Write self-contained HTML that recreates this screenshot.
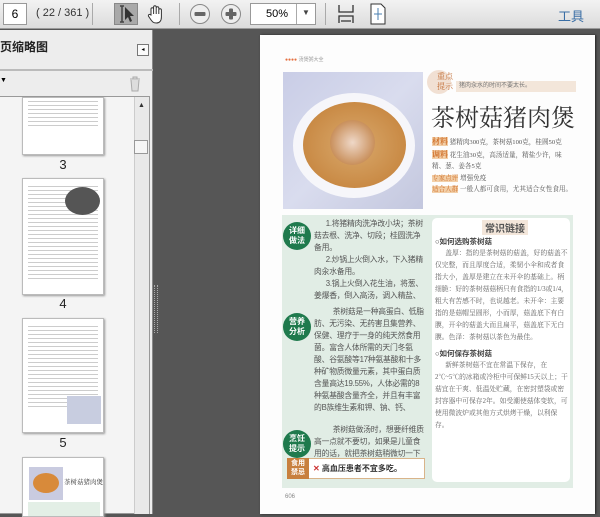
<!DOCTYPE html>
<html><head><meta charset="utf-8"><style>
*{margin:0;padding:0;box-sizing:border-box}
body{width:600px;height:514px;overflow:hidden;background:#565656;font-family:"Liberation Sans","Noto Sans CJK SC",sans-serif;position:relative}
.a{position:absolute}
.tb{left:0;top:0;width:600px;height:29px;background:linear-gradient(#f2f2f2,#dcdcdc);border-bottom:1px solid #9a9a9a}
.sep{width:1px;height:22px;top:3px;background:#aaa}
.t{font-size:7.8px;line-height:12px;color:#555;overflow:hidden;letter-spacing:-0.2px}
.circ{width:28px;height:28px;border-radius:50%;background:#1f7a4d;color:#fff;font-size:8px;line-height:10px;text-align:center;padding-top:4px;font-weight:bold}
.thumb{background:#fff;border:1px solid #bbb;box-shadow:1px 1px 2px #999;left:22px;width:82px;overflow:hidden}
.ln{height:1px;background:#ccc;margin:3px 5px}
.lbl{font-size:13px;color:#222;width:82px;left:22px;text-align:center}
.rt{font-size:6.8px;line-height:12px;color:#666;font-family:"Liberation Serif","Noto Serif CJK SC",serif;overflow:hidden}
</style></head><body>
<div class="a tb">
 <div class="a" style="left:3px;top:3px;width:24px;height:22px;background:#fff;border:1px solid #999;font-size:12px;text-align:center;line-height:20px">6</div>
 <div class="a" style="left:36px;top:7px;font-size:11px;color:#333">( 22 / 361 )</div>
 <div class="a sep" style="left:92px"></div>
 <div class="a" style="left:114px;top:3px;width:24px;height:22px;background:#a9a9a9;border:1px solid #888"></div>
 <svg class="a" style="left:114px;top:3px" width="24" height="22"><path d="M6 3h4M8 3v16M6 19h4" stroke="#444" stroke-width="1.5" fill="none"/><path d="M11 4l9 9h-4l2 5-2 1-2-5-3 3z" fill="#333"/></svg>
 <svg class="a" style="left:145px;top:3px" width="22" height="22"><path d="M6 12V6a1.3 1.3 0 0 1 2.6 0v5V4a1.3 1.3 0 0 1 2.6 0v7V5a1.3 1.3 0 0 1 2.6 0v6V7a1.3 1.3 0 0 1 2.6 0v7c0 4-2 6-5 6s-4-1-6-4l-2-3a1.2 1.2 0 0 1 2-1.2z" fill="#fff" stroke="#333" stroke-width="1"/></svg>
 <div class="a sep" style="left:179px"></div>
 <svg class="a" style="left:189px;top:3px" width="22" height="22"><circle cx="11" cy="11" r="9.5" fill="#eee" stroke="#888"/><rect x="5.5" y="9" width="11" height="4" rx="1" fill="#666"/></svg>
 <svg class="a" style="left:220px;top:3px" width="22" height="22"><circle cx="11" cy="11" r="9.5" fill="#eee" stroke="#888"/><rect x="5.5" y="9" width="11" height="4" rx="1" fill="#666"/><rect x="9" y="5.5" width="4" height="11" rx="1" fill="#666"/></svg>
 <div class="a" style="left:250px;top:3px;width:66px;height:22px;background:#fff;border:1px solid #999"><span class="a" style="left:15px;top:4px;font-size:11px">50%</span><div class="a" style="left:45px;top:0;width:1px;height:20px;background:#aaa"></div><span class="a" style="left:51px;top:4px;font-size:8px;color:#444">▼</span></div>
 <div class="a sep" style="left:325px"></div>
 <svg class="a" style="left:337px;top:3px" width="18" height="22"><path d="M2 2v7h14V2M2 20v-7h14v7M4 18h10" stroke="#333" stroke-width="1.3" fill="none"/></svg>
 <svg class="a" style="left:369px;top:3px" width="18" height="22"><path d="M2 1h10l4 4v16H2z" fill="#fff" stroke="#333"/><path d="M9 5v12M5 11h8" stroke="#4a7fb0"/></svg>
 <div class="a" style="left:558px;top:6px;font-size:13px;color:#3a6ea5">工具</div>
</div>
<div class="a" style="left:0;top:30px;width:153px;height:484px;background:#ededed;border-right:1px solid #888"></div>
<div class="a" style="left:0;top:38px;font-size:12px;font-weight:bold;color:#222">页缩略图</div>
<div class="a" style="left:137px;top:44px;width:12px;height:12px;border:1px solid #777;background:#fafafa;font-size:6px;text-align:center;line-height:10px">◂</div>
<div class="a" style="left:0;top:69px;width:153px;height:2px;background:#bbb"></div>
<div class="a" style="left:0;top:77px;font-size:7px">▼</div>
<svg class="a" style="left:128px;top:76px" width="14" height="16"><path d="M2 3h10M5 3V1h4v2M3 4l1 11h6l1-11" stroke="#aaa" fill="#ddd"/></svg>
<div class="a" style="left:0;top:96px;width:150px;height:418px;border:1px solid #999;border-left:none;background:#f4f4f4"></div>
<div class="a" style="left:134px;top:97px;width:15px;height:417px;background:#e9e9e9;border-left:1px solid #ccc"></div>
<div class="a" style="left:138px;top:102px;font-size:7px;color:#333">▲</div>
<div class="a" style="left:134px;top:140px;width:14px;height:14px;background:#f6f6f6;border:1px solid #999"></div>
<div class="a thumb" style="top:97px;height:58px"><div class="ln"></div><div class="ln"></div><div class="ln"></div><div class="ln"></div><div class="ln"></div><div class="ln"></div><div class="ln"></div></div>
<div class="a lbl" style="top:157px">3</div>
<div class="a thumb" style="top:178px;height:117px;padding-top:4px"><div class="ln"></div><div class="ln"></div><div class="ln"></div><div class="ln"></div><div class="ln"></div><div class="ln"></div><div class="ln"></div><div class="ln"></div><div class="ln"></div><div class="ln"></div><div class="ln"></div><div class="ln"></div><div class="ln"></div><div class="ln"></div><div class="ln"></div><div class="ln"></div><div class="ln"></div><div class="ln"></div><div class="ln"></div><div class="ln"></div><div class="ln"></div><div class="ln"></div><div class="ln"></div><div class="ln"></div><div class="a" style="left:42px;top:8px;width:35px;height:28px;border-radius:50%;background:#555"></div></div>
<div class="a lbl" style="top:296px">4</div>
<div class="a thumb" style="top:318px;height:115px;padding-top:4px"><div class="ln"></div><div class="ln"></div><div class="ln"></div><div class="ln"></div><div class="ln"></div><div class="ln"></div><div class="ln"></div><div class="ln"></div><div class="ln"></div><div class="ln"></div><div class="ln"></div><div class="ln"></div><div class="ln"></div><div class="ln"></div><div class="ln"></div><div class="ln"></div><div class="ln"></div><div class="ln"></div><div class="ln"></div><div class="ln"></div><div class="ln"></div><div class="a" style="left:44px;top:77px;width:34px;height:28px;background:#c8cde0"></div></div>
<div class="a lbl" style="top:435px">5</div>
<div class="a thumb" style="top:457px;height:60px"><div class="a" style="left:6px;top:9px;width:34px;height:33px;background:#c9cbe0"><div style="margin:6px 4px;height:20px;border-radius:50%;background:#d88a3a"></div></div><div class="a" style="left:41px;top:19px;font-size:6.5px;color:#333;white-space:nowrap;font-family:'Noto Serif CJK SC',serif">茶树菇猪肉煲</div><div class="a" style="left:5px;top:44px;width:72px;height:16px;background:#e3efe6"></div></div>
<div class="a" style="left:154px;top:285px;width:4px;height:48px;border-left:1px dotted #aaa;border-right:1px dotted #aaa"></div>
<!-- page -->
<div class="a" style="left:260px;top:35px;width:335px;height:479px;background:#fdfdfd;box-shadow:1px 0 2px #222"></div>
<div class="a" style="left:285px;top:56px;font-size:5px;color:#e57040">●●●● <span style="color:#999">汤煲粥大全</span></div>
<div class="a" style="left:283px;top:72px;width:140px;height:137px;background:linear-gradient(135deg,#c9cde6,#d9dcee 50%,#c3c7de)"></div>
<div class="a" style="left:293px;top:93px;width:122px;height:105px;border-radius:50%;background:#f6f6fa"></div>
<div class="a" style="left:303px;top:102px;width:103px;height:86px;border-radius:50%;background:radial-gradient(#d9a96c,#c98a45 70%,#e1b37a)"></div>
<div class="a" style="left:330px;top:120px;width:45px;height:45px;border-radius:50%;background:radial-gradient(#efd8c8,#c9905c 70%,transparent 72%)"></div>
<div class="a" style="left:427px;top:70px;width:24px;height:24px;border-radius:50%;background:#f1e0d3"></div>
<div class="a" style="left:437px;top:72px;font-size:8px;line-height:10px;color:#c06a30;font-family:'Noto Serif CJK SC',serif">重点<br>提示</div>
<div class="a" style="left:456px;top:81px;width:120px;height:11px;background:#f3e6da;font-size:6px;color:#777;padding-left:3px;line-height:11px;white-space:nowrap;overflow:hidden">猪肉汆水的时间不要太长。</div>
<div class="a" style="left:431px;top:98px;font-size:24px;color:#333;font-family:'Noto Serif CJK SC',serif;white-space:nowrap">茶树菇猪肉煲</div>
<div class="a rt" style="left:432px;top:136px;width:142px;height:70px;line-height:11.5px;font-size:6.6px;color:#555"><span style="background:#f2cfa8;color:#d0702a;font-weight:bold;font-size:8px">材料</span> 猪精肉300克，茶树菇100克，桂圆50克<br><span style="background:#f2cfa8;color:#d0702a;font-weight:bold;font-size:8px">调料</span> 花生油30克，高汤适量，精盐少许，味精、葱、姜各5克<br><span style="background:#f2cfa8;color:#d0702a">专家点评</span> 增强免疫<br><span style="background:#f2cfa8;color:#d0702a">适合人群</span> 一般人都可食用，尤其适合女性食用。</div>
<div class="a" style="left:282px;top:215px;width:291px;height:273px;background:#e1ede5"></div>
<div class="a circ" style="left:283px;top:222px">详细<br>做法</div>
<div class="a circ" style="left:283px;top:313px">营养<br>分析</div>
<div class="a circ" style="left:283px;top:430px">烹饪<br>提示</div>
<div class="a t" style="left:314px;top:218px;width:111px;height:84px"><p style="text-indent:1.5em">1.将猪精肉洗净改小块；茶树菇去根、洗净、切段；桂圆洗净备用。</p><p style="text-indent:1.5em">2.炒锅上火倒入水，下入猪精肉汆水备用。</p><p style="text-indent:1.5em">3.锅上火倒入花生油，将葱、姜爆香，倒入高汤，调入精盐、味精，加入猪精肉、茶树菇、桂圆煲至成熟即可。</p></div>
<div class="a t" style="left:314px;top:306px;width:111px;height:108px;text-indent:2.4em">茶树菇是一种高蛋白、低脂肪、无污染、无药害且集营养、保健、理疗于一身的纯天然食用菌。富含人体所需的天门冬氨酸、谷氨酸等17种氨基酸和十多种矿物质微量元素，其中蛋白质含量高达19.55%，人体必需的8种氨基酸含量齐全，并且有丰富的B族维生素和钾、钠、钙、镁、铁、锌等矿质元素。</div>
<div class="a t" style="left:314px;top:424px;width:111px;height:36px;text-indent:2.4em">茶树菇做汤时，想要纤维质高一点就不要切，如果是儿童食用的话，就把茶树菇稍微切一下即可。</div>
<div class="a" style="left:287px;top:458px;width:138px;height:21px;background:#fff;border:1px solid #d9b48a"></div>
<div class="a" style="left:287px;top:458px;width:22px;height:21px;background:#c8803e;color:#fff;font-size:7px;line-height:9px;text-align:center;padding-top:1px;font-weight:bold">食用<br>禁忌</div>
<div class="a" style="left:313px;top:463px;font-size:8px;color:#333;font-weight:bold;white-space:nowrap"><span style="color:#c33">✕</span> 高血压患者不宜多吃。</div>
<div class="a" style="left:432px;top:218px;width:138px;height:264px;background:#fff;border-radius:5px"></div>
<div class="a" style="left:482px;top:220px;font-size:10px;color:#555;font-weight:bold;background:#f3e6da;padding:0 3px">常识链接</div>
<div class="a" style="left:435px;top:236px;font-size:7.5px;font-weight:bold;color:#444">○如何选购茶树菇</div>
<div class="a rt" style="left:435px;top:248px;width:133px;height:96px;text-indent:1.5em">盖厚：指的是茶树菇的菇盖，好的菇盖不仅完整，而且厚度合适，柔韧小伞和成者食指大小，盖厚是建立在未开伞的基础上。柄细脆：好的茶树菇菇柄只有食指的1/3或1/4，粗大有苦感不时，也说越老。未开伞：主要指的是菇帽呈圆形，小而厚，菇盖底下有白膜，开伞的菇盖大而且扁平，菇盖底下无白膜。色泽：茶树菇以茶色为最佳。</div>
<div class="a" style="left:435px;top:348px;font-size:7.5px;font-weight:bold;color:#444">○如何保存茶树菇</div>
<div class="a rt" style="left:435px;top:360px;width:133px;height:72px;text-indent:1.5em">新鲜茶树菇不宜在常温下保存，在2℃~5℃的冰箱或冷柜中可保鲜15天以上；干菇宜在干爽、低温处贮藏，在密封塑袋或密封容器中可保存2年。如受潮使菇体变软，可使用微波炉或其他方式烘烤干燥，以利保存。</div>
<div class="a" style="left:285px;top:494px;font-size:6px;color:#888">606</div>
</body></html>
